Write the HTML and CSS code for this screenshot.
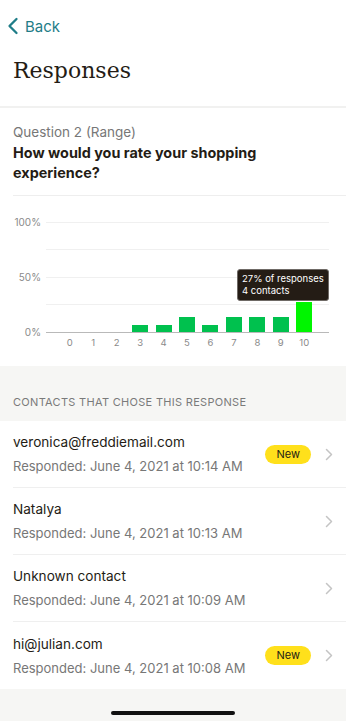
FILE: index.html
```html
<!DOCTYPE html>
<html>
<head>
<meta charset="utf-8">
<link rel="stylesheet" href="styles.css">
</head>
<body>
<div class="page">
  <header class="header">
    <a class="back">
      <svg class="back-icon" width="12" height="18" viewBox="0 0 12 18"><path d="M9.5 2 L2.5 9 L9.5 16" fill="none" stroke="#1f7d88" stroke-width="2.3" stroke-linecap="round" stroke-linejoin="round"/></svg>
      <span>Back</span>
    </a>
    <h1 class="title">Responses</h1>
  </header>

  <section class="question">
    <div class="q-label">Question 2 (Range)</div>
    <div class="q-text">How would you rate your shopping experience?</div>
  </section>

  <section class="chart">
    <div class="chart-body">
      <div class="y-labels">
        <span>100%</span>
        <span>50%</span>
        <span>0%</span>
      </div>
      <div class="plot-wrap">
        <div class="plot">
          <div class="col"></div>
          <div class="col"></div>
          <div class="col"></div>
          <div class="col"><div class="bar" style="height:7px"></div></div>
          <div class="col"><div class="bar" style="height:7px"></div></div>
          <div class="col"><div class="bar" style="height:15px"></div></div>
          <div class="col"><div class="bar" style="height:7px"></div></div>
          <div class="col"><div class="bar" style="height:15px"></div></div>
          <div class="col"><div class="bar" style="height:15px"></div></div>
          <div class="col"><div class="bar" style="height:15px"></div></div>
          <div class="col"><div class="bar bar-active" style="height:30px"></div></div>
          <div class="tooltip">27% of responses<br>4 contacts</div>
        </div>
        <div class="x-labels">
          <span>0</span><span>1</span><span>2</span><span>3</span><span>4</span><span>5</span><span>6</span><span>7</span><span>8</span><span>9</span><span>10</span>
        </div>
      </div>
    </div>
  </section>

  <section class="contacts">
    <div class="contacts-head">CONTACTS THAT CHOSE THIS RESPONSE</div>
    <ul class="list">
      <li class="row">
        <div class="row-main">
          <div class="row-name">veronica@freddiemail.com</div>
          <div class="row-sub">Responded: June 4, 2021 at 10:14 AM</div>
        </div>
        <span class="badge">New</span>
        <svg class="chev" width="8" height="13" viewBox="0 0 8 13"><path d="M1.5 1.5 L6.5 6.5 L1.5 11.5" fill="none" stroke="#c4c4c4" stroke-width="1.5" stroke-linecap="round" stroke-linejoin="round"/></svg>
      </li>
      <li class="row">
        <div class="row-main">
          <div class="row-name">Natalya</div>
          <div class="row-sub">Responded: June 4, 2021 at 10:13 AM</div>
        </div>
        <svg class="chev" width="8" height="13" viewBox="0 0 8 13"><path d="M1.5 1.5 L6.5 6.5 L1.5 11.5" fill="none" stroke="#c4c4c4" stroke-width="1.5" stroke-linecap="round" stroke-linejoin="round"/></svg>
      </li>
      <li class="row">
        <div class="row-main">
          <div class="row-name">Unknown contact</div>
          <div class="row-sub">Responded: June 4, 2021 at 10:09 AM</div>
        </div>
        <svg class="chev" width="8" height="13" viewBox="0 0 8 13"><path d="M1.5 1.5 L6.5 6.5 L1.5 11.5" fill="none" stroke="#c4c4c4" stroke-width="1.5" stroke-linecap="round" stroke-linejoin="round"/></svg>
      </li>
      <li class="row">
        <div class="row-main">
          <div class="row-name">hi@julian.com</div>
          <div class="row-sub">Responded: June 4, 2021 at 10:08 AM</div>
        </div>
        <span class="badge">New</span>
        <svg class="chev" width="8" height="13" viewBox="0 0 8 13"><path d="M1.5 1.5 L6.5 6.5 L1.5 11.5" fill="none" stroke="#c4c4c4" stroke-width="1.5" stroke-linecap="round" stroke-linejoin="round"/></svg>
      </li>
    </ul>
    <div class="home-area"><div class="home-bar"></div></div>
  </section>
</div>
</body>
</html>
```

FILE: styles.css
```css
* { box-sizing: border-box; }
html, body { margin: 0; padding: 0; background: #f6f6f4; }
body {
  font-family: "Inter", "Liberation Sans", Arial, sans-serif;
  color: #241c15;
  width: 346px;
}
.page { background: #ffffff; }

.header {
  padding: 14px 0 0 0;
  border-bottom: 2px solid #f1f1f0;
  background: #fff;
}
.back {
  display: flex;
  align-items: center;
  gap: 6px;
  padding-left: 7px;
  height: 24px;
  color: #1f7d88;
  font-size: 15px;
}
.back-icon { display: block; }
.title {
  margin: 0;
  padding: 19px 13px 21px;
  font-family: "DejaVu Serif", "Liberation Serif", serif;
  font-weight: normal;
  font-size: 22px;
  line-height: 28px;
  color: #241c15;
}

.question {
  margin-left: 13px;
  padding: 15px 13px 12px 0;
  border-bottom: 1px solid #eeeeee;
}
.q-label {
  font-size: 13.5px;
  line-height: 18px;
  color: #777;
}
.q-text {
  margin-top: 2px;
  font-size: 14.4px;
  font-weight: 700;
  line-height: 20px;
  padding-right: 60px;
}

.chart {
  padding: 26px 0 17px 0;
}
.chart-body {
  display: flex;
}
.y-labels {
  width: 42px;
  height: 120px;
  margin-top: -5px;
  padding-right: 1px;
  display: flex;
  flex-direction: column;
  justify-content: space-between;
  align-items: flex-end;
  font-size: 10px;
  line-height: 10px;
  color: #8a8a8a;
}
.plot-wrap {
  width: 283px;
  margin-left: 4px;
}
.plot {
  position: relative;
  height: 111px;
  display: flex;
  align-items: flex-end;
  padding: 0 13px 0 12px;
  border-bottom: 1px solid #b9b9b9;
  background:
    linear-gradient(#f0f0f0, #f0f0f0) 0 0 / 100% 1px no-repeat,
    linear-gradient(#f0f0f0, #f0f0f0) 0 27px / 100% 1px no-repeat,
    linear-gradient(#f0f0f0, #f0f0f0) 0 55px / 100% 1px no-repeat,
    linear-gradient(#f0f0f0, #f0f0f0) 0 82px / 100% 1px no-repeat;
}
.col {
  flex: 1;
  display: flex;
  justify-content: center;
  align-items: flex-end;
}
.bar {
  width: 16px;
  background: #00c14e;
}
.bar-active { background: #00f500; }
.tooltip {
  position: absolute;
  right: 0;
  top: 47px;
  width: 92px;
  padding: 3px 4px;
  background: #241c15;
  color: #fff;
  border-radius: 3px;
  font-size: 9.5px;
  line-height: 12px;
  border: 1px solid #6f6a66;
}
.x-labels {
  display: flex;
  padding: 4px 13px 0 12px;
  font-size: 9.5px;
  line-height: 12px;
  color: #8a8a8a;
}
.x-labels span {
  flex: 1;
  text-align: center;
}

.contacts {
  background: #f6f6f4;
}
.contacts-head {
  padding: 29px 13px 12px;
  font-size: 11px;
  line-height: 14px;
  letter-spacing: 0.3px;
  color: #7a7a7a;
}
.list {
  list-style: none;
  margin: 0;
  padding: 0;
  background: #fff;
}
.row {
  display: flex;
  align-items: center;
  margin-left: 13px;
  padding-right: 13px;
  height: 67px;
  border-bottom: 1px solid #efefef;
}
.row:last-child { border-bottom: none; }
.row-main { flex: 1; min-width: 0; }
.row-name {
  font-size: 13.6px;
  line-height: 20px;
  color: #241c15;
}
.row-sub {
  margin-top: 4px;
  font-size: 13px;
  line-height: 20px;
  color: #777;
}
.badge {
  background: #ffe01b;
  color: #241c15;
  font-size: 11px;
  line-height: 19px;
  padding: 0 11px;
  border-radius: 10px;
  margin-right: 14px;
}
.chev { display: block; flex-shrink: 0; }

.home-area {
  height: 33px;
  display: flex;
  justify-content: center;
  align-items: flex-end;
  padding-bottom: 7px;
}
.home-bar {
  width: 124px;
  height: 4px;
  border-radius: 3px;
  background: #111;
}
```
